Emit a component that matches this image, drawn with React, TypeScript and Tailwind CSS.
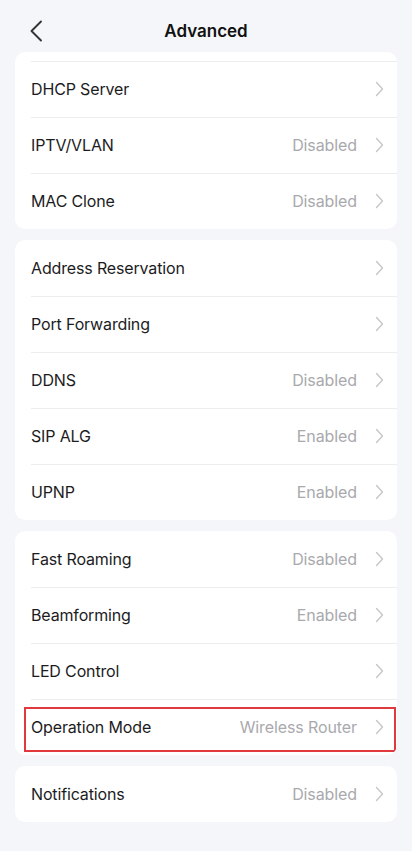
import React from "react";

type Row = { label: string; value?: string; highlight?: boolean };

const groups: Row[][] = [
  [
    { label: "DHCP Server" },
    { label: "IPTV/VLAN", value: "Disabled" },
    { label: "MAC Clone", value: "Disabled" },
  ],
  [
    { label: "Address Reservation" },
    { label: "Port Forwarding" },
    { label: "DDNS", value: "Disabled" },
    { label: "SIP ALG", value: "Enabled" },
    { label: "UPNP", value: "Enabled" },
  ],
  [
    { label: "Fast Roaming", value: "Disabled" },
    { label: "Beamforming", value: "Enabled" },
    { label: "LED Control" },
    { label: "Operation Mode", value: "Wireless Router", highlight: true },
  ],
  [{ label: "Notifications", value: "Disabled" }],
];

function Chevron() {
  return (
    <svg width="9" height="16" viewBox="0 0 9 16" fill="none" className="shrink-0">
      <path d="M1.5 1.5 L7.5 8 L1.5 14.5" stroke="#c7c7c9" strokeWidth="1.4" strokeLinecap="round" strokeLinejoin="round" />
    </svg>
  );
}

function ListRow({ row, border }: { row: Row; border: boolean }) {
  return (
    <div className="relative h-[56px] pl-[16px]">
      <div className={`h-full flex items-center pr-[13px] pb-[1px] ${border ? "border-t border-[#ededef]" : ""}`}>
        <span className="flex-1 text-[16px] text-[#1c1c1e] tracking-[-0.15px]">{row.label}</span>
        {row.value && <span className="text-[16px] text-[#a9a9ad] mr-[18px] tracking-[-0.1px]">{row.value}</span>}
        <Chevron />
      </div>
      {row.highlight && (
        <div className="absolute left-[9px] right-[1px] top-[8px] bottom-[3px] border-2 border-[#e0393e] pointer-events-none" />
      )}
    </div>
  );
}

export default function App() {
  return (
    <div className="min-h-[851px] w-[412px] bg-[#f5f6fa]" style={{ fontFamily: "Inter, 'Noto Sans', sans-serif" }}>
      <div className="h-[52px] flex items-center justify-center relative">
        <svg width="14" height="22" viewBox="0 0 14 22" fill="none" className="absolute left-[29px] top-[20px]">
          <path d="M12 1.5 L2.5 11 L12 20.5" stroke="#333333" strokeWidth="1.9" strokeLinecap="round" strokeLinejoin="round" />
        </svg>
        <span className="text-[17px] font-semibold text-[#111] mt-[12px]">Advanced</span>
      </div>
      <div className="flex flex-col gap-[11px] px-[15px]">
        {groups.map((g, gi) => (
          <div key={gi} className={`bg-white rounded-[10px] overflow-hidden ${gi === 0 ? "pt-[9px]" : ""}`}>
            {g.map((r, ri) => (
              <ListRow key={r.label} row={r} border={gi === 0 || ri > 0} />
            ))}
          </div>
        ))}
      </div>
    </div>
  );
}
